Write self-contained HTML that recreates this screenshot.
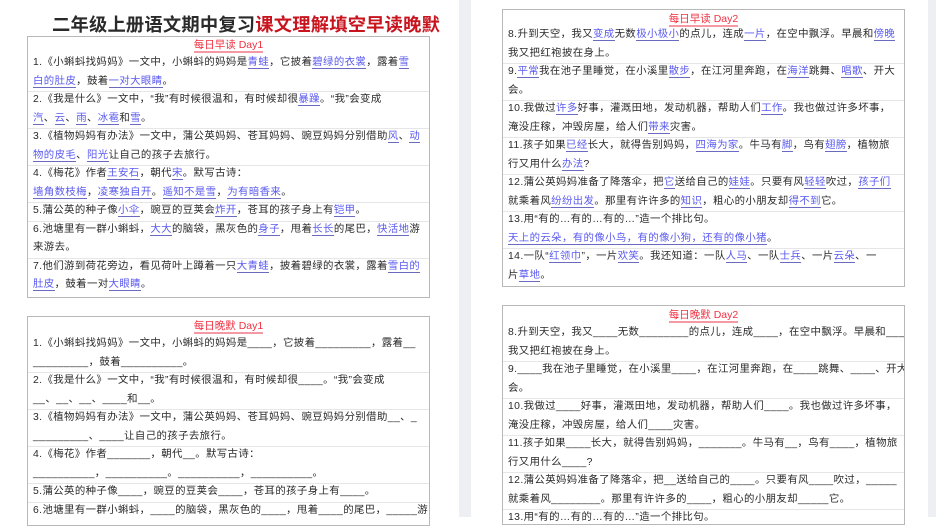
<!DOCTYPE html>
<html><head><meta charset="utf-8"><style>
*{margin:0;padding:0;box-sizing:border-box}
body{width:936px;height:517px;overflow:hidden;background:#fff;position:relative;font-family:"Liberation Sans","Noto Sans CJK SC",sans-serif;color:#2a2a2a}
.strip{position:absolute;top:0;height:517px;background:#eeeff2}
.title{position:absolute;left:52px;top:11px;font-size:18.3px;font-weight:bold;letter-spacing:0.2px;white-space:nowrap}
.title .r{color:#c8141e}
.box{position:absolute;border:1px solid #b8b8b8;background:#fff;overflow:hidden}
.h{position:absolute;left:0;right:0;text-align:center;font-size:10.5px;color:#f03040;height:16px;line-height:16px}
.h span{border-bottom:2px solid #f59aa5}
.l{position:absolute;left:5px;white-space:nowrap;font-size:10.4px;line-height:18px;height:18px;letter-spacing:0.4px}
.sep{position:absolute;left:0;right:0;height:1px;background:#e6e6e6}
u{color:#5a5af0;text-decoration:none;border-bottom:1px solid #6a6ac0}
</style></head><body>
<div class="strip" style="left:459px;width:12px"></div>
<div class="strip" style="left:928px;width:8px"></div>
<div class="title">二年级上册语文期中复习<span class="r">课文理解填空早读晚默</span></div>

<div class="box" style="left:27px;top:36px;width:403px;height:262px">
<div class="h" style="top:0"><span>每日早读 Day1</span></div>
<div class="l" style="top:17px">1.《小蝌蚪找妈妈》一文中，小蝌蚪的妈妈是<u>青蛙</u>，它披着<u>碧绿的衣裳</u>，露着<u>雪</u></div>
<div class="l" style="top:35.5px"><u>白的肚皮</u>，鼓着<u>一对大眼睛</u>。</div>
<div class="sep" style="top:54px"></div>
<div class="l" style="top:54px">2.《我是什么》一文中，“我”有时候很温和，有时候却很<u>暴躁</u>。“我”会变成</div>
<div class="l" style="top:72.5px"><u>汽</u>、<u>云</u>、<u>雨</u>、<u>冰雹</u>和<u>雪</u>。</div>
<div class="sep" style="top:91px"></div>
<div class="l" style="top:91px">3.《植物妈妈有办法》一文中，蒲公英妈妈、苍耳妈妈、豌豆妈妈分别借助<u>风</u>、<u>动</u></div>
<div class="l" style="top:109.5px"><u>物的皮毛</u>、<u>阳光</u>让自己的孩子去旅行。</div>
<div class="sep" style="top:128px"></div>
<div class="l" style="top:128px">4.《梅花》作者<u>王安石</u>，朝代<u>宋</u>。默写古诗：</div>
<div class="l" style="top:146.5px"><u>墙角数枝梅</u>，<u>凌寒独自开</u>。<u>遥知不是雪</u>，<u>为有暗香来</u>。</div>
<div class="sep" style="top:165px"></div>
<div class="l" style="top:165px">5.蒲公英的种子像<u>小伞</u>，豌豆的豆荚会<u>炸开</u>，苍耳的孩子身上有<u>铠甲</u>。</div>
<div class="sep" style="top:183.5px"></div>
<div class="l" style="top:183.5px">6.池塘里有一群小蝌蚪，<u>大大</u>的脑袋，黑灰色的<u>身子</u>，甩着<u>长长</u>的尾巴，<u>快活地</u>游</div>
<div class="l" style="top:202px">来游去。</div>
<div class="sep" style="top:220.5px"></div>
<div class="l" style="top:220.5px">7.他们游到荷花旁边，看见荷叶上蹲着一只<u>大青蛙</u>，披着碧绿的衣裳，露着<u>雪白的</u></div>
<div class="l" style="top:239px"><u>肚皮</u>，鼓着一对<u>大眼睛</u>。</div>
</div>

<div class="box" style="left:27px;top:316px;width:403px;height:210px">
<div class="h" style="top:1px"><span>每日晚默 Day1</span></div>
<div class="l" style="top:18px">1.《小蝌蚪找妈妈》一文中，小蝌蚪的妈妈是____，它披着_________，露着__</div>
<div class="l" style="top:36.5px">_________，鼓着__________。</div>
<div class="sep" style="top:55px"></div>
<div class="l" style="top:55px">2.《我是什么》一文中，“我”有时候很温和，有时候却很____。“我”会变成</div>
<div class="l" style="top:73.5px">__、__、__、____和__。</div>
<div class="sep" style="top:92px"></div>
<div class="l" style="top:92px">3.《植物妈妈有办法》一文中，蒲公英妈妈、苍耳妈妈、豌豆妈妈分别借助__、_</div>
<div class="l" style="top:110.5px">_________、____让自己的孩子去旅行。</div>
<div class="sep" style="top:129px"></div>
<div class="l" style="top:129px">4.《梅花》作者_______，朝代__。默写古诗：</div>
<div class="l" style="top:147.5px">__________，__________。__________，__________。</div>
<div class="sep" style="top:166px"></div>
<div class="l" style="top:166px">5.蒲公英的种子像____，豌豆的豆荚会____，苍耳的孩子身上有____。</div>
<div class="sep" style="top:184.5px"></div>
<div class="l" style="top:184.5px">6.池塘里有一群小蝌蚪，____的脑袋，黑灰色的____，甩着____的尾巴，_____游</div>
</div>

<div class="box" style="left:502px;top:9px;width:403px;height:278px">
<div class="h" style="top:1px"><span>每日早读 Day2</span></div>
<div class="l" style="top:16px">8.升到天空，我又<u>变成</u>无数<u>极小极小</u>的点儿，连成<u>一片</u>，在空中飘浮。早晨和<u>傍晚</u></div>
<div class="l" style="top:34.5px">我又把红袍披在身上。</div>
<div class="sep" style="top:53px"></div>
<div class="l" style="top:53px">9.<u>平常</u>我在池子里睡觉，在小溪里<u>散步</u>，在江河里奔跑，在<u>海洋</u>跳舞、<u>唱歌</u>、开大</div>
<div class="l" style="top:71.5px">会。</div>
<div class="sep" style="top:90px"></div>
<div class="l" style="top:90px">10.我做过<u>许多</u>好事，灌溉田地，发动机器，帮助人们<u>工作</u>。我也做过许多坏事，</div>
<div class="l" style="top:108.5px">淹没庄稼，冲毁房屋，给人们<u>带来</u>灾害。</div>
<div class="sep" style="top:127px"></div>
<div class="l" style="top:127px">11.孩子如果<u>已经</u>长大，就得告别妈妈，<u>四海为家</u>。牛马有<u>脚</u>，鸟有<u>翅膀</u>，植物旅</div>
<div class="l" style="top:145.5px">行又用什么<u>办法</u>?</div>
<div class="sep" style="top:164px"></div>
<div class="l" style="top:164px">12.蒲公英妈妈准备了降落伞，把<u>它</u>送给自己的<u>娃娃</u>。只要有风<u>轻轻</u>吹过，<u>孩子们</u></div>
<div class="l" style="top:182.5px">就乘着风<u>纷纷出发</u>。那里有许许多的<u>知识</u>，粗心的小朋友却<u>得不到</u>它。</div>
<div class="sep" style="top:201px"></div>
<div class="l" style="top:201px">13.用“有的…有的…有的…”造一个排比句。</div>
<div class="l" style="top:219.5px"><u>天上的云朵，有的像小鸟，有的像小狗，还有的像小猪</u>。</div>
<div class="sep" style="top:238px"></div>
<div class="l" style="top:238px">14.一队“<u>红领巾</u>”，一片<u>欢笑</u>。我还知道：一队<u>人马</u>、一队<u>士兵</u>、一片<u>云朵</u>、一</div>
<div class="l" style="top:256.5px">片<u>草地</u>。</div>
</div>

<div class="box" style="left:502px;top:305px;width:403px;height:220px">
<div class="h" style="top:1px"><span>每日晚默 Day2</span></div>
<div class="l" style="top:18px">8.升到天空，我又____无数________的点儿，连成____，在空中飘浮。早晨和____</div>
<div class="l" style="top:36.5px">我又把红袍披在身上。</div>
<div class="sep" style="top:55px"></div>
<div class="l" style="top:55px">9.____我在池子里睡觉，在小溪里____，在江河里奔跑，在____跳舞、____、开大</div>
<div class="l" style="top:73.5px">会。</div>
<div class="sep" style="top:92px"></div>
<div class="l" style="top:92px">10.我做过____好事，灌溉田地，发动机器，帮助人们____。我也做过许多坏事，</div>
<div class="l" style="top:110.5px">淹没庄稼，冲毁房屋，给人们____灾害。</div>
<div class="sep" style="top:129px"></div>
<div class="l" style="top:129px">11.孩子如果____长大，就得告别妈妈，_______。牛马有__，鸟有____，植物旅</div>
<div class="l" style="top:147.5px">行又用什么____?</div>
<div class="sep" style="top:166px"></div>
<div class="l" style="top:166px">12.蒲公英妈妈准备了降落伞，把__送给自己的____。只要有风____吹过，_____</div>
<div class="l" style="top:184.5px">就乘着风________。那里有许许多的____，粗心的小朋友却_____它。</div>
<div class="sep" style="top:203px"></div>
<div class="l" style="top:203px">13.用“有的…有的…有的…”造一个排比句。</div>
</div>
</body></html>
